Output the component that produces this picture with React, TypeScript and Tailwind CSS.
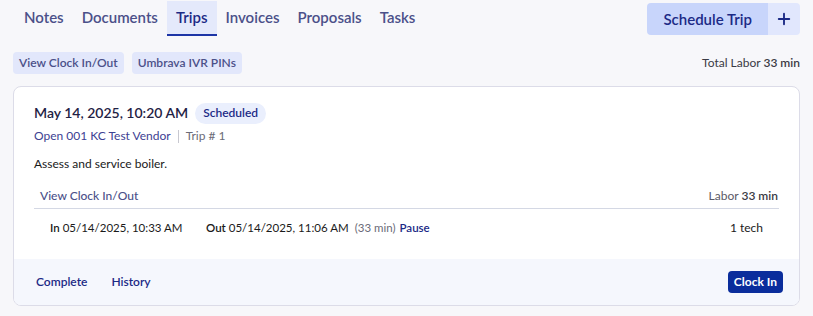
import { Plus } from 'lucide-react';

const TABS = ['Notes', 'Documents', 'Trips', 'Invoices', 'Proposals', 'Tasks'];

export default function App() {
  return (
    <div className="min-h-[316px] w-[813px] bg-[#f7f7fa] px-[13px] font-['Lato',sans-serif] text-[#1f2230]">
      {/* Tabs */}
      <div className="flex items-start justify-between pt-[1px]">
        <div className="flex pl-[2px]">
          {TABS.map((tab) => (
            <div
              key={tab}
              className={
                tab === 'Trips'
                  ? 'flex h-[35px] items-center border-b-2 border-[#1d35a6] bg-[#e4e9fb] px-[9px] text-[15px] font-semibold text-[#1c2a86]'
                  : 'flex h-[35px] items-center border-b-2 border-transparent px-[9px] text-[15px] font-semibold text-[#4b5089]'
              }
            >
              {tab}
            </div>
          ))}
        </div>
        <div className="mt-[2px] flex h-[32px] overflow-hidden rounded-[4px]">
          <button className="bg-[#c8d5fb] px-[16px] text-[15px] font-semibold text-[#1c2a86]">Schedule Trip</button>
          <button className="flex w-[32px] items-center justify-center bg-[#e1e7fd] text-[#1c2a86]">
            <Plus className="h-[18px] w-[18px]" strokeWidth={2.5} />
          </button>
        </div>
      </div>

      {/* Actions row */}
      <div className="mt-[16px] flex items-center justify-between">
        <div className="flex gap-[8px]">
          <button className="h-[22px] rounded-[4px] bg-[#e2e7fb] px-[6px] text-[12px] font-semibold text-[#4b5089]">View Clock In/Out</button>
          <button className="h-[22px] rounded-[4px] bg-[#e2e7fb] px-[6px] text-[12px] font-semibold text-[#4b5089]">Umbrava IVR PINs</button>
        </div>
        <div className="text-[12px] text-[#3a3a44]">
          Total Labor <span className="font-semibold">33 min</span>
        </div>
      </div>

      {/* Trip card */}
      <div className="mt-[12px] overflow-hidden rounded-[8px] border border-[#dcdce8] bg-white">
        <div className="px-[20px] pt-[15px]">
          <div className="flex items-center gap-[7px]">
            <div className="text-[14px] leading-[22px] font-semibold text-[#1f2245]">May 14, 2025, 10:20 AM</div>
            <div className="flex h-[21px] items-center rounded-full bg-[#eaeffd] px-[8px] text-[12px] font-semibold text-[#1c2a86]">Scheduled</div>
          </div>
          <div className="mt-[3px] flex items-center text-[12px]">
            <span className="text-[#3d4192]">Open 001 KC Test Vendor</span>
            <span className="mx-[7px] h-[13px] w-px bg-[#c8c8d0]" />
            <span className="text-[#6b6b78]">Trip # 1</span>
          </div>
          <div className="mt-[10px] text-[12px] text-[#1a1a1a]">Assess and service boiler.</div>

          <div className="mt-[14px] flex items-center justify-between border-b border-[#d4d8e4] pb-[3px] pl-[6px] pr-[1px] text-[12px]">
            <span className="font-medium text-[#4b5089]">View Clock In/Out</span>
            <span className="text-[#5a5a66]">
              Labor <span className="font-semibold text-[#3a3a44]">33 min</span>
            </span>
          </div>
          <div className="flex h-[38px] items-center px-[16px] text-[11.5px] text-[#1a1a1a]">
            <span className="w-[156px]">
              <span className="font-semibold">In</span> 05/14/2025, 10:33 AM
            </span>
            <span>
              <span className="font-semibold">Out</span> 05/14/2025, 11:06 AM
            </span>
            <span className="ml-[6px] text-[#6b6b78]">(33 min)</span>
            <span className="ml-[4px] font-semibold text-[#1c2a86]">Pause</span>
            <span className="ml-auto text-[12px]">1 tech</span>
          </div>
        </div>

        {/* Footer */}
        <div className="mt-[12px] flex h-[46px] items-center justify-between bg-[#f5f7fd] pl-[22px] pr-[16px]">
          <div className="flex gap-[24px] text-[12px] font-semibold text-[#1c2a86]">
            <span>Complete</span>
            <span>History</span>
          </div>
          <button className="h-[22px] rounded-[4px] bg-[#0a2d9c] px-[6px] text-[12px] font-bold text-white">Clock In</button>
        </div>
      </div>
    </div>
  );
}
